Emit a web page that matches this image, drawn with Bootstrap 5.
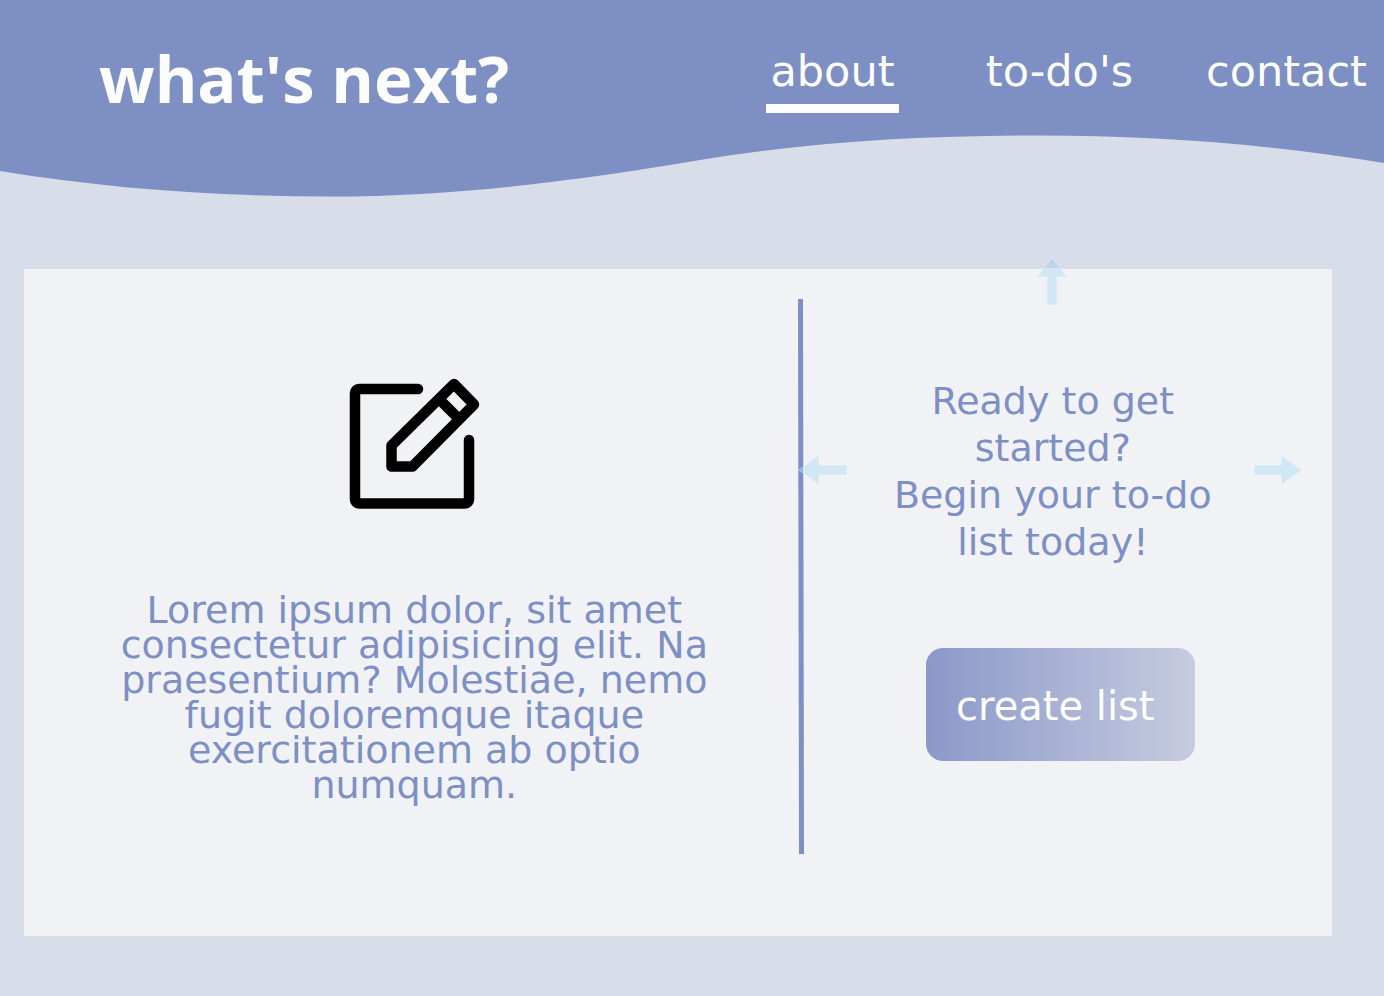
<!DOCTYPE html>
<html lang="en">
<head>
<meta charset="utf-8">
<meta name="viewport" content="width=device-width, initial-scale=1">
<title>what's next?</title>
<link href="https://cdn.jsdelivr.net/npm/bootstrap@5.3.0/dist/css/bootstrap.min.css" rel="stylesheet">
<style>
  :root { --periwinkle: #7e8fc3; --mist: #d8ddea; --paper: #f0f2f6; }
  body { background: var(--mist); color: var(--periwinkle); font-family: "DejaVu Sans", Verdana, sans-serif; font-size: 38px; }
  .site-header { background: var(--periwinkle); min-height: 135px; padding-left: 99px; overflow: hidden; }
  .brand { color: #fdfdfe; font: bold 65px/88px "Open Sans", Tahoma, sans-serif; margin-top: 34px; white-space: nowrap; }
  .brand:hover { color: #fff; }
  .main-nav { width: 53%; margin: 45px -16px 0 0; }
  .main-nav a { color: #fdfdfe; font-size: 43px; line-height: 50px; padding: 0 4px 8px; border-bottom: 9px solid transparent; white-space: nowrap; }
  .main-nav a.active { border-color: #fdfdfe; }
  .wave { height: 62px; }
  .panel { background: var(--paper); margin: 72px 52px 60px 24px; padding: 30px 30px 82px 0; }
  .intro { padding: 79px 0 0 8px; }
  .intro p { line-height: 35px; margin: 83px 0 45px; }
  .divider { width: 7px; flex: none; }
  .start { width: 39%; padding-top: 79px; }
  .start p { line-height: 47px; }
  .btn-create { color: #fdfdfe; font-size: 40px; line-height: 60px; padding: 28px 40px 25px 30px; border: 0; border-radius: 17px; margin: 82px 0 0 15px; background: linear-gradient(90deg, #8b99c9, #c6cbdf); }
  .btn-create:hover { color: #fff; }
  .arrow { position: absolute; fill: #d1e8f4; stroke: #f5f7fa; stroke-opacity: .5; stroke-width: 1; }
  .arrow-up { top: -43px; left: 50%; margin-left: -17px; }
  .arrow-left { top: 155px; left: -6px; }
  .arrow-right { top: 155px; right: -1px; }
</style>
</head>
<body>
<header>
  <div class="site-header d-flex justify-content-between">
    <a href="#" class="brand text-decoration-none">what's next?</a>
    <nav class="main-nav row row-cols-3 g-0 text-center" aria-label="Main">
      <div class="col"><a href="#about" class="active d-inline-block text-decoration-none" aria-current="page">about</a></div>
      <div class="col"><a href="#todos" class="d-inline-block text-decoration-none">to-do's</a></div>
      <div class="col"><a href="#contact" class="d-inline-block text-decoration-none">contact</a></div>
    </nav>
  </div>
  <svg class="wave d-block w-100" viewBox="0 0 1384 62" preserveAspectRatio="none" aria-hidden="true"><path fill="#7e8fc3" d="M0 0V36C110 54 220 61.500 330 61.500C460 61.500 580 45 700 25C815 6 930 .5 1040 .5C1155 .5 1270 9 1384 28V0Z"/></svg>
</header>
<main class="panel d-flex" id="about">
  <section class="intro flex-fill text-center">
    <svg width="132" height="132" viewBox="0 0 132 132" fill="none" stroke="#000" stroke-width="10.5" stroke-linejoin="round" stroke-linecap="round" aria-hidden="true">
      <path d="M70 11H11a4 4 0 0 0-4 4V121.500a4 4 0 0 0 4 4H117a4 4 0 0 0 4-4V62"/>
      <path d="M106 6 126 26.500 64.500 88.500H43.500V67.500ZM91 21 111 41"/>
    </svg>
    <p>Lorem ipsum dolor, sit amet<br>consectetur adipisicing elit. Na<br>praesentium? Molestiae, nemo<br>fugit doloremque itaque<br>exercitationem ab optio<br>numquam.</p>
  </section>
  <svg class="divider" viewBox="0 0 7 555" preserveAspectRatio="none" aria-hidden="true"><path fill="#7e8fc3" d="M1 0H6L7 555H2Z"/></svg>
  <section class="start position-relative text-center">
    <p class="mb-0">Ready to get<br>started?<br>Begin your to-do<br>list today!</p>
    <button type="button" class="btn btn-create">create list</button>
    <svg class="arrow arrow-up" width="32" height="50" viewBox="0 0 32 50" aria-hidden="true"><path d="M16 1 31 21H21V49H11V21H1Z"/><path fill="#bcd6e8" stroke="none" d="M16 2 24 12H8Z"/></svg>
    <svg class="arrow arrow-left" width="50" height="32" viewBox="0 0 50 32" aria-hidden="true"><path d="M1 16 21 1V11H49V21H21V31Z"/><path fill="#98b4d8" stroke="none" d="M1 16 5 13V19Z"/></svg>
    <svg class="arrow arrow-right" width="50" height="32" viewBox="0 0 50 32" aria-hidden="true"><path d="M49 16 28 1V11H1V21H28V31Z"/></svg>
  </section>
</main>
<script src="https://cdn.jsdelivr.net/npm/bootstrap@5.3.0/dist/js/bootstrap.bundle.min.js"></script>
</body>
</html>
